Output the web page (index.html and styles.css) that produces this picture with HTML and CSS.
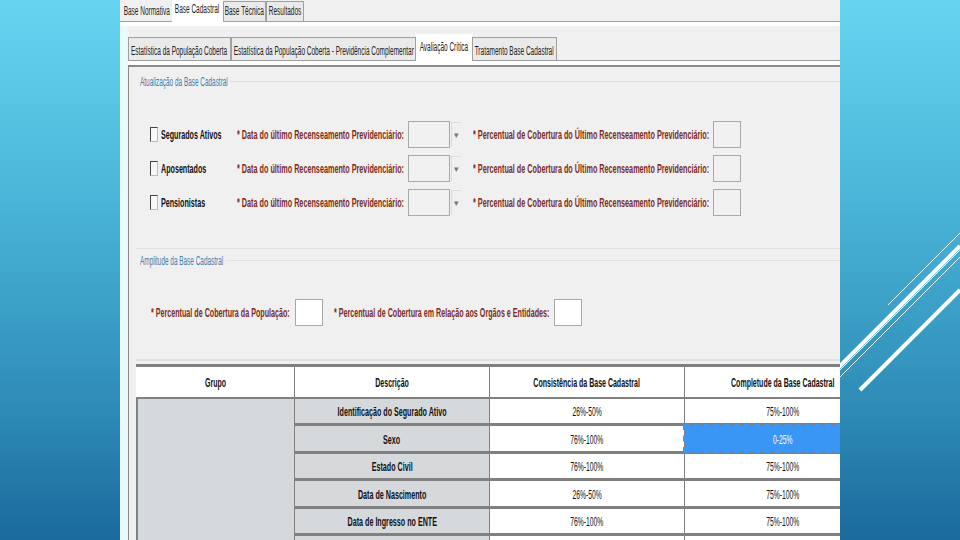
FILE: index.html
```html
<!DOCTYPE html>
<html lang="en">
<head>
    <meta charset="UTF-8">
    <meta name="viewport" content="width=device-width, initial-scale=1.0">
    <title>Avaliação Crítica</title>
    <link rel="stylesheet" href="styles.css">
</head>
<body>
    <!-- Slide decoration -->
    <svg class="deco" width="960" height="540" viewBox="0 0 960 540">
        <line x1="888" y1="305" x2="960" y2="233" stroke="#e6f8fc" stroke-width="1"/>
        <line x1="830" y1="376" x2="960" y2="246" stroke="#fff" stroke-width="4"/>
        <line x1="830" y1="380" x2="960" y2="250" stroke="#e6f8fc" stroke-width="1"/>
        <line x1="830" y1="387" x2="960" y2="257" stroke="#e6f8fc" stroke-width="1"/>
        <line x1="860" y1="390" x2="960" y2="290" stroke="#fff" stroke-width="4"/>
    </svg>

    <div class="window">
        <!-- Main tabs -->
        <div class="tabs main-tabs">
            <div class="tab plain w50"><span class="sq">Base Normativa</span></div>
            <div class="tab active w51"><span class="sq">Base Cadastral</span></div>
            <div class="tab w43"><span class="sq">Base Técnica</span></div>
            <div class="tab w38"><span class="sq">Resultados</span></div>
        </div>

        <div class="content">
            <!-- Sub tabs -->
            <div class="tabs sub-tabs">
                <div class="tab w103"><span class="sq">Estatística da População Coberta</span></div>
                <div class="tab w185"><span class="sq">Estatística da População Coberta - Previdência Complementar</span></div>
                <div class="tab active w56"><span class="sq">Avaliação Crítica</span></div>
                <div class="tab w85"><span class="sq">Tratamento Base Cadastral</span></div>
            </div>

            <div class="panel">
                <div class="legend">
                    <div class="legend-text w90"><span class="sq">Atualização da Base Cadastral</span></div>
                </div>

                <div class="census-rows">
                    <div class="census-row">
                        <span class="check"></span>
                        <div class="check-label"><span class="sq">Segurados Ativos</span></div>
                        <div class="req date-label"><span class="sq">* Data do último Recenseamento Previdenciário:</span></div>
                        <span class="box date"></span>
                        <span class="arrow">▾</span>
                        <div class="req pct-label"><span class="sq">* Percentual de Cobertura do Último Recenseamento Previdenciário:</span></div>
                        <span class="box"></span>
                    </div>
                    <div class="census-row">
                        <span class="check"></span>
                        <div class="check-label"><span class="sq">Aposentados</span></div>
                        <div class="req date-label"><span class="sq">* Data do último Recenseamento Previdenciário:</span></div>
                        <span class="box date"></span>
                        <span class="arrow">▾</span>
                        <div class="req pct-label"><span class="sq">* Percentual de Cobertura do Último Recenseamento Previdenciário:</span></div>
                        <span class="box"></span>
                    </div>
                    <div class="census-row">
                        <span class="check"></span>
                        <div class="check-label"><span class="sq">Pensionistas</span></div>
                        <div class="req date-label"><span class="sq">* Data do último Recenseamento Previdenciário:</span></div>
                        <span class="box date"></span>
                        <span class="arrow">▾</span>
                        <div class="req pct-label"><span class="sq">* Percentual de Cobertura do Último Recenseamento Previdenciário:</span></div>
                        <span class="box"></span>
                    </div>
                </div>

                <div class="divider first"></div>

                <div class="legend">
                    <div class="legend-text w85"><span class="sq">Amplitude da Base Cadastral</span></div>
                </div>

                <div class="coverage-row">
                    <div class="req pop-label"><span class="sq">* Percentual de Cobertura da População:</span></div>
                    <span class="box white"></span>
                    <div class="req org-label"><span class="sq">* Percentual de Cobertura em Relação aos Orgãos e Entidades:</span></div>
                    <span class="box white"></span>
                </div>

                <div class="divider second"></div>

                <!-- Results table -->
                <div class="grid">
                    <div class="head"><span class="sq">Grupo</span></div>
                    <div class="head"><span class="sq">Descrição</span></div>
                    <div class="head"><span class="sq">Consistência da Base Cadastral</span></div>
                    <div class="head"><span class="sq">Completude da Base Cadastral</span></div>

                    <div class="group"></div>

                    <div class="desc"><span class="sq">Identificação do Segurado Ativo</span></div>
                    <div class="val"><span class="sq">26%-50%</span></div>
                    <div class="val"><span class="sq">75%-100%</span></div>

                    <div class="desc"><span class="sq">Sexo</span></div>
                    <div class="val"><span class="sq">76%-100%</span></div>
                    <div class="val selected"><span class="sq">0-25%</span></div>

                    <div class="desc"><span class="sq">Estado Civil</span></div>
                    <div class="val"><span class="sq">76%-100%</span></div>
                    <div class="val"><span class="sq">75%-100%</span></div>

                    <div class="desc"><span class="sq">Data de Nascimento</span></div>
                    <div class="val"><span class="sq">26%-50%</span></div>
                    <div class="val"><span class="sq">75%-100%</span></div>

                    <div class="desc"><span class="sq">Data de Ingresso no ENTE</span></div>
                    <div class="val"><span class="sq">76%-100%</span></div>
                    <div class="val"><span class="sq">75%-100%</span></div>

                    <div class="desc"></div>
                    <div class="val"></div>
                    <div class="val"></div>
                </div>
            </div>
        </div>
    </div>
</body>
</html>
```

FILE: styles.css
```css
html, body {
    margin: 0;
    height: 100%;
}
body {
    width: 960px;
    height: 540px;
    overflow: hidden;
    position: relative;
    background: linear-gradient(180deg, #66d5f1 0%, #4ab5d8 37%, #2f8db8 74%, #1a6a9c 100%);
    font-family: "Liberation Sans", Arial, sans-serif;
    font-size: 13px;
    color: #111;
}
.deco {
    position: absolute;
    left: 0;
    top: 0;
}
.window {
    position: relative;
    width: 720px;
    height: 540px;
    margin-left: 120px;
    overflow: hidden;
    background: #f0f0f0;
}

/* The reference is a squeezed screenshot, so the text is narrowed too */
.sq {
    display: inline-block;
    flex: none;
    white-space: nowrap;
    transform: scaleX(0.55);
}

/* Tabs */
.tabs {
    display: flex;
    align-items: flex-end;
}
.tab {
    display: flex;
    align-items: center;
    justify-content: center;
    box-sizing: border-box;
    background: #eaeaea;
    border: 1px solid #a0a0a0;
    border-bottom: 0;
    font-size: 12px;
    color: #222;
}
.tab .sq {
    transform: scaleX(0.54);
}
.tab.active {
    background: #fff;
    border-color: #fff;
}
.tab.plain {
    background: transparent;
    border-color: transparent;
}
.main-tabs {
    height: 21px;
    padding-left: 2px;
    border-bottom: 1px solid #a0a0a0;
}
.main-tabs .tab {
    height: 20px;
    padding-bottom: 2px;
}
.main-tabs .tab.active {
    height: 22px;
    margin-bottom: -1px;
    align-items: flex-start;
    padding: 1px 0 0;
}
.sub-tabs {
    height: 26px;
    margin-top: 8px;
    border-bottom: 1px solid #a0a0a0;
}
.sub-tabs .tab {
    height: 23px;
    padding-top: 3px;
}
.sub-tabs .tab.active {
    height: 27px;
    margin-bottom: -1px;
    align-items: flex-start;
    padding-top: 5px;
}
.w38 { width: 38px; }
.w43 { width: 43px; }
.w50 { width: 50px; }
.w51 { width: 51px; }
.w56 { width: 56px; }
.w85 { width: 85px; }
.w90 { width: 90px; }
.w103 { width: 103px; }
.w185 { width: 185px; }

.content {
    padding: 0 0 0 8px;
    height: 518px;
    background: linear-gradient(90deg, #e8fafc 8px, #f0f0f0 8px);
    border-top: 4px solid #fff;
    box-sizing: border-box;
}
.panel {
    border-top: 6px solid;
    border-image: linear-gradient(180deg, #fff 0, #fff 4px, #8a8a8a 4px, #8a8a8a 6px) 6;
    border-left: 1px solid #a0a0a0;
    background: #f0f0f0;
    height: 600px;
    padding-left: 7px;
}

/* Section titles */
.legend {
    display: flex;
    align-items: center;
    height: 14px;
    margin-left: 4px;
    font-size: 12px;
    color: #3f7cab;
}
.legend::after {
    content: "";
    flex: 1;
    height: 1px;
    margin-top: -2px;
    background: #e0e0e0;
}
.legend-text {
    display: flex;
}
.legend-text .sq {
    transform: scaleX(0.535);
    transform-origin: left center;
}
.panel > .legend:first-child {
    margin-top: 8px;
}

/* Census rows */
.census-rows {
    display: flex;
    flex-direction: column;
    gap: 7px;
    margin-top: 32px;
}
.census-row {
    display: flex;
    align-items: center;
    height: 27px;
    padding-left: 14px;
}
.check {
    flex: none;
    box-sizing: border-box;
    width: 8px;
    height: 15px;
    border: 1px solid #bbb;
    border-top-color: #444;
    border-left-color: #444;
    background: #f8f8f8;
}
.check-label {
    display: flex;
    width: 76px;
    margin-left: 3px;
    font-weight: bold;
}
.check-label .sq,
.req .sq {
    transform-origin: left center;
}
.census-row .req .sq {
    transform: scaleX(0.557);
}
.req {
    display: flex;
    color: #7c2c1c;
    font-weight: bold;
}
.date-label { width: 171px; }
.pct-label { width: 240px; }
.pop-label { width: 144px; }
.org-label { width: 220px; }
.box {
    flex: none;
    box-sizing: border-box;
    width: 28px;
    height: 27px;
    border: 1px solid #a8a8a8;
    background: #f0f0f0;
}
.box.date {
    width: 42px;
}
.box.white {
    background: #fff;
}
.arrow {
    display: flex;
    align-items: center;
    justify-content: center;
    box-sizing: border-box;
    width: 10px;
    height: 25px;
    margin: 0 12px 0 1px;
    border-left: 1px solid #ddd;
    border-top: 1px solid #ddd;
    color: #777;
    font-size: 9px;
}

.divider {
    height: 1px;
    background: #e0e0e0;
}
.divider.first {
    margin-top: 32px;
    margin-bottom: 5px;
}
.divider.second {
    margin-top: 33px;
    height: 2px;
}

/* Coverage row */
.coverage-row {
    display: flex;
    align-items: center;
    height: 27px;
    margin-top: 31px;
    padding-left: 15px;
}
.coverage-row .box:nth-of-type(1) {
    margin-right: 11px;
}

/* Table */
.grid {
    display: grid;
    grid-template-columns: 156px 194px 194px 195px;
    grid-auto-rows: 24.5px;
    gap: 3px 1px;
    margin-top: 3px;
    padding: 3px 0 0 2px;
    width: 760px;
    background: #808080;
}
.head {
    display: flex;
    align-items: center;
    justify-content: center;
    box-sizing: border-box;
    height: 30px;
    padding-top: 1px;
    margin-bottom: -3px;
    background: #fff;
    font-weight: bold;
}
.head .sq {
    transform: scaleX(0.54);
}
.grid > .head:first-child {
    margin-left: -2px;
}
.group {
    grid-row: 2 / span 6;
    background: #d6d9dc;
    margin-top: 4px;
}
.desc,
.val {
    display: flex;
    align-items: center;
    justify-content: center;
    padding-top: 2px;
    margin-top: 4px;
    margin-bottom: -4px;
}
.desc {
    background: #d6d9dc;
    font-weight: bold;
}
.val {
    background: #fff;
}
.val .sq {
    transform: scaleX(0.52);
}
.val.selected {
    background: #3a96f5;
    color: #fff;
    outline: 2px dashed #3a96f5;
}
```
